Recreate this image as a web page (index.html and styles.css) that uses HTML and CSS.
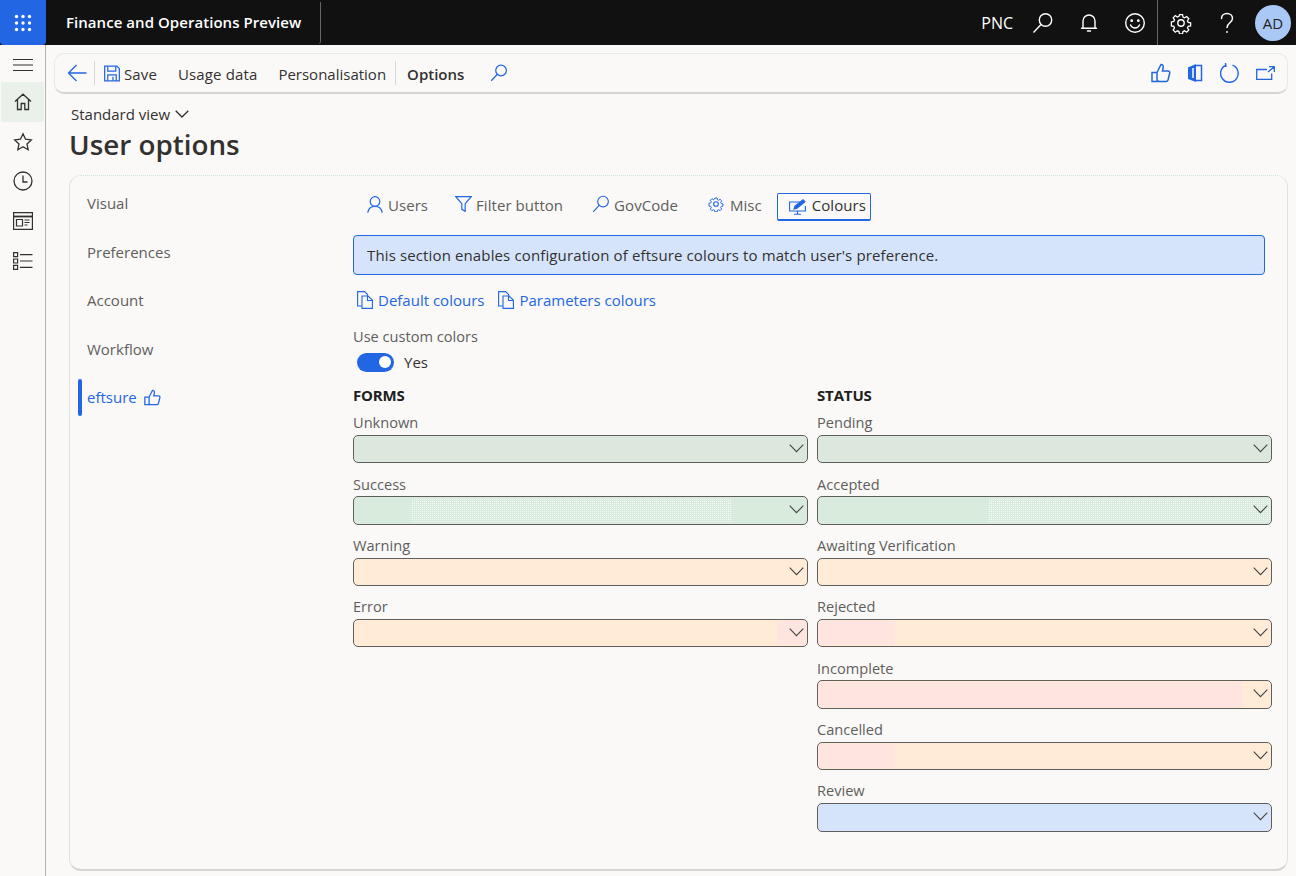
FILE: index.html
```html
<!DOCTYPE html>
<html lang="en">
<head>
<meta charset="UTF-8">
<title>User options</title>
<link rel="stylesheet" href="styles.css">
</head>
<body>
<header class="topbar">
  <div class="waffle">
    <svg width="18" height="18" viewBox="0 0 18 18" fill="#fff"><circle cx="2.5" cy="2.5" r="1.7"/><circle cx="9" cy="2.5" r="1.7"/><circle cx="15.5" cy="2.5" r="1.7"/><circle cx="2.5" cy="9" r="1.7"/><circle cx="9" cy="9" r="1.7"/><circle cx="15.5" cy="9" r="1.7"/><circle cx="2.5" cy="15.5" r="1.7"/><circle cx="9" cy="15.5" r="1.7"/><circle cx="15.5" cy="15.5" r="1.7"/></svg>
  </div>
  <div class="app-title">Finance and Operations Preview</div>
  <div class="company">PNC</div>
  <div class="top-icon">
    <svg width="22" height="22" viewBox="0 0 22 22" fill="none" stroke="#fff" stroke-width="1.4"><circle cx="13.5" cy="8" r="6.2"/><path d="M9 12.5 1.5 20.5"/></svg>
  </div>
  <div class="top-icon">
    <svg width="20" height="20" viewBox="0 0 20 20" fill="none" stroke="#fff" stroke-width="1.4"><path d="M4 15V8a6 6 0 0 1 12 0v7M2.5 15.2h15M8.5 18h3" stroke-linecap="round"/></svg>
  </div>
  <div class="top-icon top-icon-last">
    <svg width="22" height="22" viewBox="0 0 22 22" fill="none" stroke="#fff" stroke-width="1.4"><circle cx="11" cy="11" r="9.3"/><circle cx="7.7" cy="8.7" r=".7" fill="#fff"/><circle cx="14.3" cy="8.7" r=".7" fill="#fff"/><path d="M6.5 13c1 2 2.7 3 4.500 3s3.500-1 4.500-3" stroke-linecap="round"/></svg>
  </div>
  <div class="top-icon">
    <svg width="22" height="22" viewBox="0 0 22 22" fill="none" stroke="#fff" stroke-width="1.4"><circle cx="11" cy="11" r="3.2"/><path d="M9.3 1.800h3.400l.5 2.700 1.800.8 2.300-1.500 2.400 2.400-1.500 2.300.8 1.800 2.700.5v3.400l-2.700.5-.8 1.800 1.500 2.300-2.400 2.400-2.300-1.500-1.800.8-.5 2.700H9.300l-.5-2.700-1.800-.8-2.300 1.500-2.400-2.400 1.500-2.300-.8-1.800-2.700-.5V9.800l2.700-.5.8-1.800-1.500-2.300 2.400-2.400L7 4.300l1.800-.8z" transform="translate(1.100 1.100) scale(.9)"/></svg>
  </div>
  <div class="top-icon">
    <svg width="20" height="22" viewBox="0 0 20 22" fill="none" stroke="#fff" stroke-width="1.5"><path d="M4.500 6.500C4.500 3.500 7 1.500 10 1.500s5.500 2 5.500 5c0 4-5.500 4.500-5.500 9" stroke-linecap="round"/><circle cx="10" cy="20" r=".9" fill="#fff" stroke="none"/></svg>
  </div>
  <div class="avatar-cell"><div class="avatar">AD</div></div>
</header>

<div class="shell">
  <nav class="side-nav">
    <div class="side-item side-burger">
      <svg width="20" height="14" viewBox="0 0 20 14" stroke="#323130" stroke-width="1.2"><path d="M0 1.500h20M0 7h20M0 12.500h20"/></svg>
    </div>
    <div class="side-item side-active">
      <svg width="18" height="18" viewBox="0 0 18 18" fill="none" stroke="#323130" stroke-width="1.3"><path d="M1 8.500 9 1.200l8 7.300M3.500 6.500V16.500h3.700v-6h3.600v6h3.700V6.500"/></svg>
    </div>
    <div class="side-item">
      <svg width="20" height="20" viewBox="0 0 20 20" fill="none" stroke="#323130" stroke-width="1.3"><path d="m10 1.800 2.500 5.400 5.800.7-4.300 4 1.200 5.800-5.200-2.900-5.200 2.900L6 11.900l-4.300-4 5.800-.7z"/></svg>
    </div>
    <div class="side-item">
      <svg width="20" height="20" viewBox="0 0 20 20" fill="none" stroke="#323130" stroke-width="1.3"><circle cx="10" cy="10" r="9"/><path d="M10 4.500V11h4.500"/></svg>
    </div>
    <div class="side-item">
      <svg width="20" height="18" viewBox="0 0 20 18" fill="none" stroke="#323130" stroke-width="1.2"><path d="M.6.600h18.800v16.800H.6z"/><path d="M.6 4.500h18.800" stroke-width="1.800"/><path d="M3.500 7.500h6v6.500h-6zM11.500 8h5M11.500 10.500h5M11.500 13h3"/></svg>
    </div>
    <div class="side-item">
      <svg width="20" height="18" viewBox="0 0 20 18" fill="none" stroke="#323130" stroke-width="1.2"><path d="M.6.600h4v4h-4zM.6 7h4v4h-4zM.6 13.400h4v4h-4zM7 2.600h12.500M7 9h12.500M7 15.400h12.500"/></svg>
    </div>
  </nav>

  <main class="main">
    <div class="action-pane">
      <svg class="back-icon" width="20" height="18" viewBox="0 0 20 18" fill="none" stroke="#2266e3" stroke-width="1.3"><path d="M19.500 9H1.500M9.500 1 1.500 9l8 8"/></svg>
      <span class="pane-sep"></span>
      <svg class="save-icon" width="16" height="17" viewBox="0 0 17 17" fill="none" stroke="#2266e3" stroke-width="1.3"><path d="M.7.700h13l2.600 2.600v13H.7z"/><path d="M4 .7v5.300h8.500V.7M4 16.300V10h9v6.300M9.500 12v4"/></svg>
      <span class="pane-text pane-save">Save</span>
      <span class="pane-text pane-usage">Usage data</span>
      <span class="pane-text pane-person">Personalisation</span>
      <span class="pane-sep pane-sep-2"></span>
      <span class="pane-text pane-options">Options</span>
      <svg class="pane-search" width="18" height="18" viewBox="0 0 22 22" fill="none" stroke="#2266e3" stroke-width="1.5"><circle cx="13.500" cy="8" r="6.500"/><path d="M9 12.500 1.500 20.500"/></svg>
      <div class="pane-right">
        <svg width="20" height="20" viewBox="0 0 20 20" fill="none" stroke="#2266e3" stroke-width="1.5"><path d="M6 9.500 10 1.500c1.800 0 2.500 1.300 2.200 3L11.500 8H17c1.300 0 2 1 1.700 2.200L17 17c-.3 1-1 1.500-2 1.500H8.500c-1 0-1.500-.4-2.500-.8zM1 9.500h5v9H1z"/></svg>
        <svg width="16" height="20" viewBox="0 0 16 20" fill="none"><path d="M1 4.500 9 1v18l-8-3z" fill="#2266e3"/><path d="M9 2.500h5.500v15H9" stroke="#2266e3" stroke-width="1.500"/><path d="M6 5v10" stroke="#fff" stroke-width="1.500"/></svg>
        <svg width="20" height="20" viewBox="0 0 20 20" fill="none" stroke="#2266e3" stroke-width="1.4"><path d="M12.500 2.200A8.800 8.800 0 1 1 5.800 2.400M5.500 0 6 3.200 2.600 3.600"/></svg>
        <svg width="19" height="14" viewBox="0 0 19 14" fill="none" stroke="#2266e3" stroke-width="1.3"><path d="M11 3.500H.7v9.800h15V7.500M13 .7h5.300V6M18 1l-6 5"/></svg>
      </div>
    </div>

    <div class="view-name">Standard view
      <svg width="14" height="8" viewBox="0 0 14 8" fill="none" stroke="#323130" stroke-width="1.3"><path d="m.7.700 6.300 6.300L13.300.7"/></svg>
    </div>
    <h1 class="page-title">User options</h1>

    <section class="card">
      <ul class="section-list">
        <li>Visual</li>
        <li>Preferences</li>
        <li>Account</li>
        <li>Workflow</li>
        <li class="section-active">eftsure
          <svg width="17" height="17" viewBox="0 0 20 20" fill="none" stroke="#2266e3" stroke-width="1.5"><path d="M6 9.500 10 1.500c1.800 0 2.500 1.300 2.200 3L11.500 8H17c1.300 0 2 1 1.700 2.200L17 17c-.3 1-1 1.500-2 1.500H8.500c-1 0-1.500-.4-2.500-.8zM1 9.500h5v9H1z"/></svg>
        </li>
      </ul>

      <div class="content">
        <div class="tabs">
          <span class="tab tab-users">
            <svg width="16" height="17" viewBox="0 0 16 17" fill="none" stroke="#2266e3" stroke-width="1.2"><circle cx="8" cy="5.500" r="4.800"/><path d="M.8 16.800C1.300 12.800 4 10.300 8 10.300s6.700 2.500 7.200 6.500"/></svg>
            <span class="tab-text">Users</span></span>
          <span class="tab tab-filter">
            <svg width="17" height="16" viewBox="0 0 17 16" fill="none" stroke="#2266e3" stroke-width="1.2"><path d="M.8.700h15.400l-6 7v7.600l-3.400-2V7.700z"/></svg>
            <span class="tab-text">Filter button</span></span>
          <span class="tab tab-gov">
            <svg width="18" height="18" viewBox="0 0 22 22" fill="none" stroke="#2266e3" stroke-width="1.4"><circle cx="13.500" cy="8" r="6.500"/><path d="M9 12.500 1.500 20.500"/></svg>
            <span class="tab-text">GovCode</span></span>
          <span class="tab tab-misc">
            <svg width="16" height="16" viewBox="0 0 22 22" fill="none" stroke="#2266e3" stroke-width="1.500"><circle cx="11" cy="11" r="3.200"/><path d="M9.300 1.800h3.400l.5 2.700 1.800.8 2.300-1.500 2.400 2.400-1.500 2.300.8 1.800 2.700.5v3.400l-2.700.5-.8 1.800 1.500 2.300-2.400 2.400-2.300-1.500-1.800.8-.5 2.700H9.300l-.5-2.700-1.800-.8-2.300 1.500-2.400-2.400 1.500-2.300-.8-1.800-2.700-.5V9.800l2.700-.5.8-1.800-1.500-2.300 2.400-2.400L7 4.300l1.800-.8z" transform="translate(1.100 1.100) scale(.9)"/></svg>
            <span class="tab-text">Misc</span></span>
          <span class="tab tab-active">
            <svg width="18" height="16" viewBox="0 0 18 16" fill="none" stroke="#2266e3" stroke-width="1.100"><path d="M11 3H.6v9h15.800V7M8.500 12v3M5 15.300h7"/><path d="m5 10 1-3 8-6.200 2 2-8 6.400z" fill="#2266e3"/></svg>
            <span class="tab-text">Colours</span></span>
        </div>

        <div class="message">This section enables configuration of eftsure colours to match user's preference.</div>

        <div class="links">
          <a class="link link-default">
            <svg width="16" height="18" viewBox="0 0 16 18" fill="none" stroke="#2266e3" stroke-width="1.100"><path d="M5 15H.6V.6h7l3 3V5"/><path d="M5 5h6l4.400 4v8.400H5z"/><path d="M10.500 5v4.500h4.900"/></svg>
            Default colours</a>
          <a class="link">
            <svg width="16" height="18" viewBox="0 0 16 18" fill="none" stroke="#2266e3" stroke-width="1.100"><path d="M5 15H.6V.6h7l3 3V5"/><path d="M5 5h6l4.400 4v8.400H5z"/><path d="M10.500 5v4.500h4.900"/></svg>
            Parameters colours</a>
        </div>

        <div class="toggle-label">Use custom colors</div>
        <div class="toggle-row"><span class="toggle"><span class="knob"></span></span>Yes</div>

        <div class="columns">
          <div class="column">
            <h2 class="col-title">FORMS</h2>
            <div class="field"><label>Unknown</label>
              <div class="select bg-green"><span class="dither dither-hatch"></span><svg class="chev" width="15" height="9" viewBox="0 0 15 9" fill="none" stroke="#444" stroke-width="1.100"><path d="m.7.700 6.800 7 6.800-7"/></svg></div>
            </div>
            <div class="field"><label>Success</label>
              <div class="select bg-green"><span class="dither dither-light dither-success"></span><svg class="chev" width="15" height="9" viewBox="0 0 15 9" fill="none" stroke="#444" stroke-width="1.100"><path d="m.7.700 6.800 7 6.800-7"/></svg></div>
            </div>
            <div class="field"><label>Warning</label>
              <div class="select bg-orange"><svg class="chev" width="15" height="9" viewBox="0 0 15 9" fill="none" stroke="#444" stroke-width="1.100"><path d="m.7.700 6.800 7 6.800-7"/></svg></div>
            </div>
            <div class="field"><label>Error</label>
              <div class="select bg-orange"><span class="dither dither-pink dither-error"></span><svg class="chev" width="15" height="9" viewBox="0 0 15 9" fill="none" stroke="#444" stroke-width="1.100"><path d="m.7.700 6.800 7 6.800-7"/></svg></div>
            </div>
          </div>
          <div class="column">
            <h2 class="col-title">STATUS</h2>
            <div class="field"><label>Pending</label>
              <div class="select bg-green"><span class="dither dither-hatch"></span><svg class="chev" width="15" height="9" viewBox="0 0 15 9" fill="none" stroke="#444" stroke-width="1.100"><path d="m.7.700 6.800 7 6.800-7"/></svg></div>
            </div>
            <div class="field"><label>Accepted</label>
              <div class="select bg-green"><span class="dither dither-light dither-accepted"></span><svg class="chev" width="15" height="9" viewBox="0 0 15 9" fill="none" stroke="#444" stroke-width="1.100"><path d="m.7.700 6.800 7 6.800-7"/></svg></div>
            </div>
            <div class="field"><label>Awaiting Verification</label>
              <div class="select bg-orange"><svg class="chev" width="15" height="9" viewBox="0 0 15 9" fill="none" stroke="#444" stroke-width="1.100"><path d="m.7.700 6.800 7 6.800-7"/></svg></div>
            </div>
            <div class="field"><label>Rejected</label>
              <div class="select bg-orange"><span class="dither dither-pink dither-short"></span><svg class="chev" width="15" height="9" viewBox="0 0 15 9" fill="none" stroke="#444" stroke-width="1.100"><path d="m.7.700 6.800 7 6.800-7"/></svg></div>
            </div>
            <div class="field"><label>Incomplete</label>
              <div class="select bg-orange"><span class="dither dither-pink dither-incomplete"></span><svg class="chev" width="15" height="9" viewBox="0 0 15 9" fill="none" stroke="#444" stroke-width="1.100"><path d="m.7.700 6.800 7 6.800-7"/></svg></div>
            </div>
            <div class="field"><label>Cancelled</label>
              <div class="select bg-orange"><span class="dither dither-pink dither-short"></span><svg class="chev" width="15" height="9" viewBox="0 0 15 9" fill="none" stroke="#444" stroke-width="1.100"><path d="m.7.700 6.800 7 6.800-7"/></svg></div>
            </div>
            <div class="field"><label>Review</label>
              <div class="select bg-blue"><svg class="chev" width="15" height="9" viewBox="0 0 15 9" fill="none" stroke="#444" stroke-width="1.100"><path d="m.7.700 6.800 7 6.800-7"/></svg></div>
            </div>
          </div>
        </div>
      </div>
    </section>
  </main>
</div>
</body>
</html>
```

FILE: styles.css
```css
* {
  box-sizing: border-box;
}
body {
  margin: 0;
  height: 876px;
  overflow: hidden;
  background: #faf9f8;
  color: #323130;
  font-family: "Open Sans", "Noto Sans", sans-serif;
  font-size: 15px;
}

/* top bar */
.topbar {
  display: flex;
  align-items: center;
  height: 45px;
  background: #111;
  color: #fff;
}
.waffle {
  display: flex;
  align-items: center;
  justify-content: center;
  width: 46px;
  height: 45px;
  background: #2266e3;
  border-radius: 0 0 4px 4px;
}
.app-title {
  width: 275px;
  height: 42px;
  padding-left: 20px;
  line-height: 40px;
  font-weight: 600;
  letter-spacing: .05px;
  white-space: nowrap;
  border-right: 1px solid #666;
  border-radius: 0 0 3px 0;
}
.company {
  margin-left: auto;
  margin-right: 7px;
  font-size: 16px;
}
.top-icon {
  display: flex;
  align-items: center;
  justify-content: center;
  width: 46px;
  height: 45px;
}
.top-icon-last {
  border-right: 1px solid #666;
}
.avatar-cell {
  display: flex;
  align-items: center;
  justify-content: center;
  width: 46px;
  height: 45px;
}
.avatar {
  width: 36px;
  height: 36px;
  border-radius: 50%;
  background: #a9c8f5;
  color: #222;
  line-height: 36px;
  text-align: center;
}

/* left nav */
.shell {
  display: flex;
  height: 831px;
}
.side-nav {
  width: 46px;
  flex: none;
  border-right: 1px solid #b5b4b2;
  padding: 0 1px;
}
.side-item {
  display: flex;
  align-items: center;
  justify-content: center;
  height: 39.800px;
}
.side-burger {
  height: 37px;
  padding-top: 3px;
}
.side-active {
  background: #eaf0ea;
}

/* action pane */
.main {
  flex: 1;
  min-width: 0;
  padding: 8px 8px 0 8px;
}
.action-pane {
  display: flex;
  align-items: center;
  height: 41px;
  padding: 0 12px;
  border: 1px solid #e2ece5;
  border-bottom: 2px solid #d4d4d0;
  border-radius: 10px;
}
.back-icon {
  flex: none;
}
.pane-sep {
  width: 1px;
  height: 24px;
  margin: 0 9px 0 7px;
  background: #d6d6d2;
}
.pane-sep-2 {
  margin: 0 11px 0 9px;
}
.save-icon {
  flex: none;
}
.pane-text {
  margin-top: 2px;
  white-space: nowrap;
}
.pane-save {
  margin-left: 4px;
  letter-spacing: .13px;
}
.pane-usage {
  margin-left: 21px;
  letter-spacing: .13px;
}
.pane-person {
  margin-left: 21px;
}
.pane-options {
  font-weight: 600;
}
.pane-search {
  margin-left: 26px;
}
.pane-right {
  display: flex;
  align-items: center;
  gap: 16.500px;
  margin-left: auto;
}

/* header */
.view-name {
  display: flex;
  align-items: center;
  gap: 5px;
  height: 18px;
  margin: 11px 0 0 17px;
}
.page-title {
  margin: 2px 0 0 15px;
  font-size: 27.800px;
  line-height: 38px;
  font-weight: 600;
}

/* form card */
.card {
  display: flex;
  height: 696px;
  margin: 12px 0 0 15px;
  padding: 1px 0 0 8px;
  border: 1px solid #dfe3df;
  border-top: 1px dotted #cfe3d6;
  border-bottom: 2px solid #d4d4d0;
  border-radius: 12px;
}
.section-list {
  width: 275px;
  flex: none;
  margin: 0;
  padding: 2px 0 0 0;
  list-style: none;
  color: #605e5c;
}
.section-list li {
  display: flex;
  align-items: center;
  gap: 7px;
  height: 48.500px;
  padding-left: 9px;
}
.section-list .section-active {
  position: relative;
  color: #2266e3;
}
.section-active::before {
  content: "";
  position: absolute;
  left: 0;
  top: 6px;
  width: 4px;
  height: 37px;
  border-radius: 2px;
  background: #2266e3;
}
.content {
  flex: 1;
  min-width: 0;
  padding-right: 14px;
}

/* tabs */
.tabs {
  display: flex;
  align-items: center;
  height: 28px;
  margin-top: 16px;
  color: #605e5c;
  letter-spacing: .05px;
}
.tab {
  display: flex;
  align-items: center;
  gap: 5px;
  margin-bottom: 6px;
  white-space: nowrap;
}
.tab-text {
  margin-top: 1px;
}
.tab-users {
  margin-left: 14px;
}
.tab-filter {
  margin-left: 27px;
  gap: 4px;
}
.tab-gov {
  margin-left: 29px;
  gap: 4px;
}
.tab-misc {
  margin-left: 30px;
  gap: 6px;
}
.tab-active {
  margin: 0 0 0 15px;
  height: 28px;
  padding: 0 4px 0 11px;
  border: 1px solid #2266e3;
  border-bottom-width: 2px;
  border-radius: 2px;
  color: #323130;
}
.tab-active .tab-text {
  margin-top: -3px;
}
.message {
  height: 40px;
  margin: 14px 8px 0 0;
  padding-left: 13px;
  line-height: 38px;
  letter-spacing: .13px;
  background: #d6e4fb;
  border: 1px solid #2266e3;
  border-radius: 4px;
  white-space: nowrap;
}
.links {
  display: flex;
  align-items: center;
  height: 20px;
  margin-top: 15px;
  padding-left: 4px;
  color: #2266e3;
}
.link {
  display: flex;
  align-items: center;
  gap: 5px;
  white-space: nowrap;
}
.link-default {
  margin-right: 14px;
}
.toggle-label {
  margin-top: 17px;
  font-size: 14.600px;
  line-height: 19px;
  color: #605e5c;
}
.toggle-row {
  display: flex;
  align-items: center;
  gap: 10px;
  height: 20px;
  margin-top: 6px;
  padding-left: 4px;
}
.toggle {
  display: flex;
  align-items: center;
  justify-content: flex-end;
  width: 37px;
  height: 19px;
  padding-right: 3px;
  border-radius: 10px;
  background: #2266e3;
}
.knob {
  width: 12px;
  height: 12px;
  border-radius: 50%;
  background: #fff;
}

/* colour fields */
.columns {
  display: grid;
  grid-template-columns: 455px 455px;
  column-gap: 9px;
  margin-top: 14px;
}
.col-title {
  margin: 0 0 5px;
  font-size: 15px;
  line-height: 18px;
  font-weight: 700;
  letter-spacing: -.15px;
  color: #201f1e;
}
.field {
  height: 61px;
}
.field:nth-of-type(3n+2) {
  height: 62px;
}
.field label {
  display: block;
  height: 26px;
  padding-top: 4px;
  font-size: 14.600px;
  line-height: 18px;
  color: #605e5c;
}
.field:nth-of-type(3n+2) label {
  padding-top: 5px;
}
.select {
  position: relative;
  display: flex;
  height: 28px;
  padding: 1px;
  border: 1px solid #605e5c;
  border-radius: 5px;
}
.field:nth-of-type(3n+2) .select,
.field:nth-of-type(7) .select {
  height: 29px;
}
.chev {
  position: absolute;
  right: 3px;
  top: 8px;
}
.bg-green {
  background: #d9ebdc;
}
.bg-orange {
  background: #ffebd6;
}
.bg-blue {
  background: #d6e4fb;
}

/* 1px dot grid, the base colour shows through at every second pixel */
.dither {
  display: block;
  height: 100%;
  background-size: 2px 2px;
}
.dither-hatch {
  width: 100%;
  border-radius: 3px;
  background-size: 4px 4px;
  background-image: repeating-linear-gradient(135deg, #d2e8d8 0 1.500px, #e6e6e0 1.500px 2.830px);
}
.dither-light {
  background-color: #f4faf5;
  background-image: linear-gradient(90deg, #d9ebdc 50%, transparent 50%), linear-gradient(#d9ebdc 50%, transparent 50%);
}
.dither-pink {
  background-color: #ffebd6;
  background-image: linear-gradient(90deg, #ffe2e2 50%, transparent 50%), linear-gradient(#ffe2e2 50%, transparent 50%);
}
.dither-success {
  width: 320px;
  margin-left: 56px;
}
.dither-accepted {
  width: 282px;
  margin-left: 169px;
}
.dither-error {
  width: 30px;
  margin-left: 422px;
}
.dither-short {
  width: 76px;
}
.dither-incomplete {
  width: 424px;
}
```
